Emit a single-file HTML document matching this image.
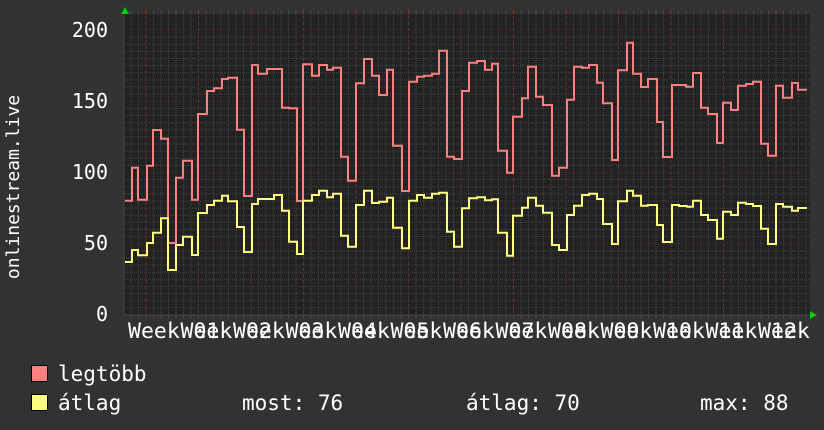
<!DOCTYPE html>
<html><head><meta charset="utf-8"><style>
html,body{margin:0;padding:0;background:#323232;}
svg{display:block}
text{font-family:"DejaVu Sans Mono","Liberation Mono",monospace;fill:#fff}
</style></head><body>
<svg id="s" width="824" height="430" xmlns="http://www.w3.org/2000/svg">
<rect x="0" y="0" width="824" height="430" fill="#323232"/>
<rect x="124" y="14" width="686" height="301" fill="#222"/>
<g id="grid"></g>
<path fill="none" stroke="#ff8080" stroke-width="2" d="M125 200.7H132V167.7H138V199.7H147V165.7H153V130H161V138.7H168V243H176V177.7H183V160.7H192V199.7H198V114H207V91H214V88.3H222V79H228V77.7H237V129.7H244V196H252V65H258V73.7H267V69H282V107.7H289V108.3H297V201H303V64.3H312V75.7H319V65H327V69.7H333V67.7H341V156.7H348V180.7H356V83.3H364V59H372V75.7H379V95H387V69.7H393V145.7H402V191H409V81.7H417V76.7H424V75.7H432V73.7H439V50.7H447V156.7H454V159H462V91H469V62.7H477V61H485V69.7H492V63.7H498V150.7H507V172.7H513V116.7H522V98.3H528V66.7H536V96.7H543V105H552V175.7H559V167.7H567V99.7H574V66.7H582V67.7H589V65H597V82.7H603V103.3H612V160H618V70.3H627V42.7H633V73.7H641V87H648V79H657V122H663V157H672V85H686V86.7H693V73H701V107.7H708V114H717V143H723V102.7H731V110H738V85.7H746V84H753V81.7H761V143.7H768V155.7H776V85.7H783V97.7H792V83H798V89.7H807"/>
<path fill="none" stroke="#ffff80" stroke-width="2" d="M125 262H132V250H138V255.3H147V243H153V232.7H161V218.3H168V270H176V245H183V236.7H192V255H198V213H207V205H214V200.7H222V195.7H228V201.3H237V227H244V252H252V204H258V199H274V195H282V210.7H289V241.7H297V254H303V200.7H312V195H319V190.7H327V197.3H333V193.7H341V235.7H348V246.7H356V205H364V190.7H372V203H379V201.7H387V197.7H393V227.7H402V248.3H409V200.7H417V195H424V197.7H432V193.7H439V192.7H447V231.7H454V246.7H462V208.3H469V198.3H477V197.3H485V200.3H492V199.3H498V232.7H507V255.7H513V215.7H522V207.7H528V197.7H536V205.7H543V212.7H552V245H559V250H567V215H574V205.7H582V195H589V193.7H597V199H603V224H612V244H618V201.3H627V190.7H633V195.7H641V205.7H648V205H657V225H663V242H672V205H679V206H687V206.7H693V200.7H701V215H708V220H717V238.7H723V211.7H731V215H738V202.7H746V204H753V206H761V228.7H768V244H776V204H783V206.7H792V210.7H798V208H807"/>
<polygon points="121,14 129,14 125,7" fill="#00cc00"/>
<polygon points="810,311 810,319 817,315" fill="#00cc00"/>
<g font-size="20" text-anchor="end">
<text x="108" y="37">200</text>
<text x="108" y="108">150</text>
<text x="108" y="179">100</text>
<text x="108" y="250">50</text>
<text x="108" y="321">0</text>
</g>
<text font-size="18" transform="translate(19,187) rotate(-90)" text-anchor="middle">onlinestream.live</text>
<g font-size="21.5">
<text x="128" y="338">Week</text>
<text x="180.5" y="338">Week</text><text x="193.5" y="338">01</text>
<text x="233" y="338">Week</text><text x="246" y="338">02</text>
<text x="285.5" y="338">Week</text><text x="298.5" y="338">03</text>
<text x="338" y="338">Week</text><text x="351" y="338">04</text>
<text x="390.5" y="338">Week</text><text x="403.5" y="338">05</text>
<text x="443" y="338">Week</text><text x="456" y="338">06</text>
<text x="495.5" y="338">Week</text><text x="508.5" y="338">07</text>
<text x="548" y="338">Week</text><text x="561" y="338">08</text>
<text x="600.5" y="338">Week</text><text x="613.5" y="338">09</text>
<text x="653" y="338">Week</text><text x="666" y="338">10</text>
<text x="705.5" y="338">Week</text><text x="718.5" y="338">11</text>
<text x="758" y="338">Week</text><text x="771" y="338">12</text>
</g>
<rect x="31.5" y="365.5" width="16" height="16" fill="#ff8080" stroke="#000"/>
<rect x="31.5" y="394.5" width="16" height="16" fill="#ffff80" stroke="#000"/>
<g font-size="21">
<text x="58" y="381">legtöbb</text>
<text x="58" y="410">átlag</text>
<text x="242" y="410">most: 76</text>
<text x="466" y="410">átlag: 70</text>
<text x="700" y="410">max: 88</text>
</g>
</svg>
<script>
var g=document.getElementById('grid'),h='';
for(var i=0;i<=40;i++){var y=315-i*7.125;if(i%10==0)continue;h+='<line x1="124" x2="810" y1="'+y+'" y2="'+y+'" stroke="#444" stroke-dasharray="1,1"/>';}
for(var x=131;x<810;x+=7.5){h+='<line y1="14" y2="315" x1="'+x+'" x2="'+x+'" stroke="#444" stroke-dasharray="1,1"/><line y1="11" y2="14" x1="'+x+'" x2="'+x+'" stroke="#4a4a4a"/><line y1="315" y2="318" x1="'+x+'" x2="'+x+'" stroke="#4a4a4a"/>';}
for(var i=1;i<=4;i++){var y=315-i*71.25;h+='<line x1="124" x2="810" y1="'+y+'" y2="'+y+'" stroke="#5e2a2a" stroke-dasharray="1,2"/>';}
for(var x=146;x<810;x+=52.5){h+='<line y1="14" y2="315" x1="'+x+'" x2="'+x+'" stroke="#5e2a2a" stroke-dasharray="1,2"/><line y1="9" y2="14" x1="'+x+'" x2="'+x+'" stroke="#8a3030"/>';}
h+='<line x1="124" x2="124" y1="14" y2="315" stroke="#444"/><line x1="124" x2="810" y1="315" y2="315" stroke="#444"/>';
g.innerHTML=h;
</script>
</body></html>
